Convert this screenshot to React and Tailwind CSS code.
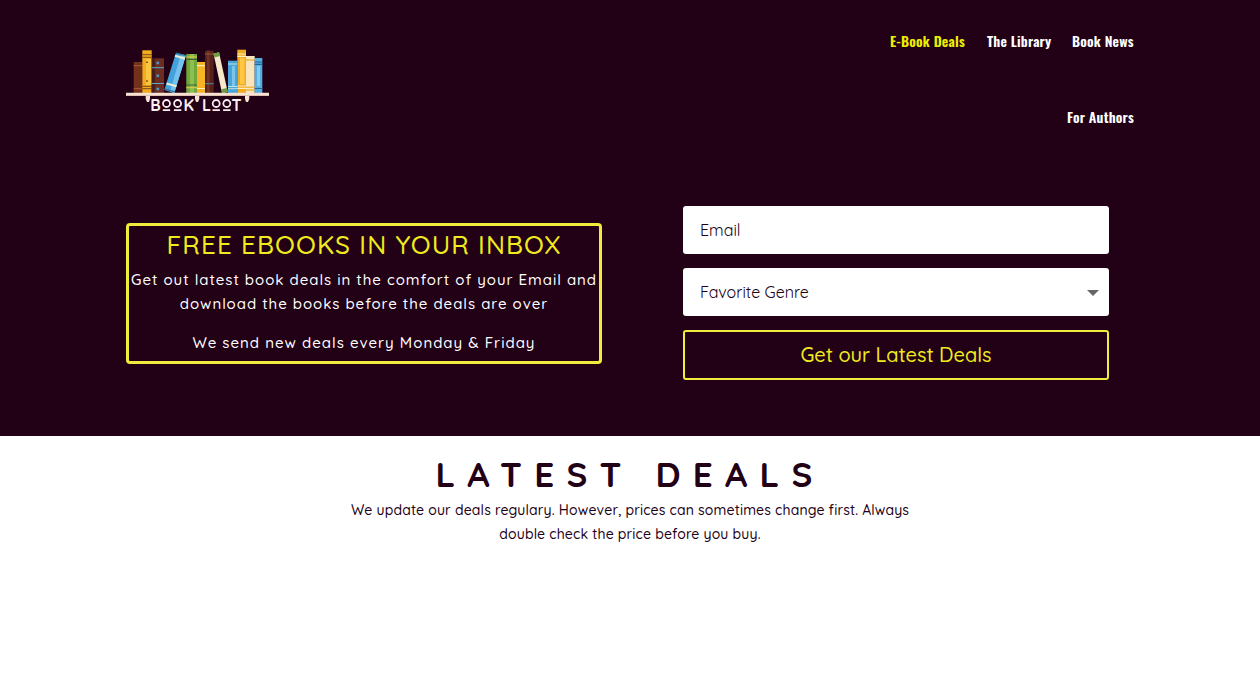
const navLinks = [
  { label: 'E-Book Deals', active: true, width: 'w-[75px]' },
  { label: 'The Library', width: 'w-[63px]' },
  { label: 'Book News', width: 'w-[62px]' },
  { label: 'For Authors', width: 'w-[67px]' },
];

const Logo = () => (
  <svg viewBox="0 0 143 72" className="w-[143px] h-[72px]" aria-label="Book Loot">
    <rect x="7.7" y="13" width="8.6" height="31" fill="#73301b" />
    <rect x="7.7" y="16" width="8.6" height="1.2" fill="#a5552b" />
    <rect x="7.7" y="39" width="8.6" height="1.2" fill="#a5552b" />

    <rect x="16.3" y="1.3" width="9.4" height="42.7" fill="#f2ad1f" />
    <rect x="20" y="10" width="5.7" height="26" fill="#fbc640" />
    <path d="M16.3 5.7h9.4M16.3 8.3h9.4M16.3 37.3h9.4M16.3 39.7h9.4" stroke="#7a4718" strokeWidth="1" />
    <path d="M20.3 13.3h1.4M20.3 32h1.4" stroke="#5a2a1c" strokeWidth="1.4" />

    <rect x="25.7" y="9.3" width="12.3" height="34.7" fill="#6b2d22" />
    <rect x="25.7" y="9.3" width="3.3" height="34.7" fill="#4a1c1c" />
    <path d="M25.7 18.7H38M25.7 34.5H38" stroke="#58a9cc" strokeWidth="1" />
    <path d="M30.5 14h2.6M30.5 26.7h2.6M30.5 40h2.6" stroke="#4b98c6" strokeWidth="2.6" />

    <path d="M50 3.7 60 6.3 48.3 44 38.3 41Z" fill="#43a2dc" />
    <path d="M55 5 60 6.3 48.3 44 44 42.7Z" fill="#75c2ec" />
    <path d="m49 6.8 10 2.8M40.5 34.5l10 2.8" stroke="#e6edd2" strokeWidth="2.2" />
    <path d="m50 4.2 9.6 2.5M39 40l9.8 2.8" stroke="#2d6a8c" strokeWidth="1.2" />

    <rect x="60.3" y="5" width="10.7" height="39" fill="#70a83c" />
    <rect x="64" y="5" width="4" height="39" fill="#8cc152" />
    <path d="M60.3 8h10.7M60.3 38.7h10.7" stroke="#e9c94c" strokeWidth="1" />
    <path d="M60.3 10.3h10.7M60.3 36h10.7" stroke="#42602a" strokeWidth="1.2" />

    <rect x="71" y="13" width="8" height="31" fill="#f5b325" />
    <path d="M71 16.7h8M71 39.5h8" stroke="#fff0b4" strokeWidth="1.2" />
    <rect x="79" y="1.7" width="8.7" height="42.3" fill="#562119" />
    <rect x="81" y="1.7" width="2.6" height="42.3" fill="#713227" />
    <path d="M79 5h8.7" stroke="#9b5b34" strokeWidth="1" />
    <path d="M79 34.7h8.7" stroke="#4e8ca8" strokeWidth="1" />

    <path d="M87.5 4.7 93 3.3 101.7 43 96 44Z" fill="#f6e8c8" />
    <path d="m87.5 4.7 5.5-1.4.9 3.600-5.400 1.500ZM95.300 40.300l5.700-1.300.7 4-5.700 1Z" fill="#6d9c42" />

    <rect x="102" y="11.7" width="9.3" height="32.3" fill="#48a5dc" />
    <rect x="106" y="17" width="3" height="20" fill="#7cc4ea" />
    <path d="M102 15h9.3M102 37.5h9.3M102 39.7h9.3" stroke="#c3e2e2" strokeWidth="1" />
    <rect x="111.3" y=".7" width="8.7" height="43.3" fill="#f2aa20" />
    <rect x="114" y="9" width="4.5" height="26" fill="#ffc744" />
    <path d="M111.3 5h8.7M111.3 7.4h8.7M111.3 37h8.7M111.3 39.4h8.7" stroke="#fff0bd" strokeWidth="1.1" />
    <rect x="120" y="7" width="8.7" height="37" fill="#f8e5bb" />
    <path d="M120 11h8.7M120 38.3h8.7M120 41h8.7" stroke="#eeb646" strokeWidth="1.4" />
    <rect x="128.7" y="9" width="7.6" height="35" fill="#55aee0" />
    <rect x="131" y="17" width="3" height="20" fill="#83cbef" />
    <path d="M128.7 13h7.6M128.7 15.3h7.6M128.7 39.5h7.6" stroke="#27649a" strokeWidth="1.2" />

    <path d="M0 43.7h143V47H0Z" fill="#f6e1d3" />
    <path d="M0 46.2h143v.8H0Z" fill="#d5b5a3" />
    <path d="M19.7 47H24v3l-1 3h-2l-1.3-3ZM69 47h4.3v3l-1.3 3h-2l-1-3ZM119 47h4.3v3l-1.3 3h-2l-1-3Z" fill="#f6e1d3" />

    <g fill="#fbeef2" fontFamily="Quicksand, Lato, sans-serif" fontWeight="700" fontSize="16">
      <text x="24.3" y="62">B</text>
      <text x="57.5" y="62">K</text>
      <text x="76" y="62">L</text>
      <text x="105.6" y="62">T</text>
    </g>
    <g fill="none" stroke="#fbeef2" strokeWidth="1.8">
      <circle cx="40.5" cy="54.5" r="3.5" />
      <circle cx="51.6" cy="54.5" r="3.5" />
      <circle cx="90.2" cy="54.5" r="3.5" />
      <circle cx="100.8" cy="54.5" r="3.5" />
      <path d="M36.8 61.100h7.400M47.900 61.100h7.400M86.500 61.100h7.400M97.100 61.100h7.400" />
    </g>
  </svg>
);

const Navbar = () => (
  <header className="flex justify-between h-[160px] px-[126px]">
    <a href="#" className="block mt-[49px] h-[72px]">
      <Logo />
    </a>
    <nav className="flex flex-wrap justify-end content-start gap-x-[22px] w-[260px] pt-[3px] font-[Oswald,'Open_Sans',sans-serif] font-semibold text-[14px] tracking-[0.2px]">
      {navLinks.map(({ label, active, width }) => (
        <a
          key={label}
          href="#"
          className={`${width} h-[76px] leading-[76px] whitespace-nowrap ${active ? 'text-[#edf000]' : 'text-white'}`}
        >
          {label}
        </a>
      ))}
    </nav>
  </header>
);

const Signup = () => (
  <section className="flex px-[126px]">
    <div className="w-[476px] h-[141px] mt-[63px] border-[3px] border-[#f0eb3c] rounded text-center text-white text-[15px] leading-6 font-medium whitespace-nowrap">
      <h2 className="h-[42px] pt-[6px] text-[26px] leading-[26px] tracking-[1.08px] text-[#f0eb1e]">
        FREE EBOOKS IN YOUR INBOX
      </h2>
      <p className="tracking-[0.96px]">
        Get out latest book deals in the comfort of your Email and
        <br />
        download the books before the deals are over
      </p>
      <p className="mt-[15px] tracking-[1px]">We send new deals every Monday &amp; Friday</p>
    </div>

    <form className="flex flex-col gap-[14px] w-[426px] mt-[46px] ml-[81px] text-[16px] text-[#220016]">
      <input
        type="text"
        placeholder="Email"
        className="h-12 px-[17px] bg-white rounded-[3px] placeholder:text-[#220016] placeholder:opacity-100"
      />
      <button type="button" className="flex items-center justify-between h-12 pl-[17px] pr-[10px] bg-white rounded-[3px]">
        <span>Favorite Genre</span>
        <span className="mt-[2px] border-x-6 border-t-6 border-x-transparent border-t-[#666]" />
      </button>
      <button type="button" className="h-[50px] border-2 border-[#f0eb3c] rounded-[3px] text-[20px] font-medium tracking-[-0.05px] text-[#f0eb1e]">
        Get our Latest Deals
      </button>
    </form>
  </section>
);

const App = () => (
  <div className="min-h-screen bg-white font-[Quicksand,Lato,sans-serif]">
    <div className="h-[436px] bg-[#220016]">
      <Navbar />
      <Signup />
    </div>

    <main className="pt-[21px] text-center text-[#220016]">
      <h1 className="text-[35px] leading-[35px] font-bold tracking-[12.2px]">LATEST DEALS</h1>
      <p className="mt-[6px] text-[14px] leading-6 font-medium tracking-[0.15px]">
        We update our deals regulary. However, prices can sometimes change first. Always
        <br />
        double check the price before you buy.
      </p>
    </main>
  </div>
);

export default App;
